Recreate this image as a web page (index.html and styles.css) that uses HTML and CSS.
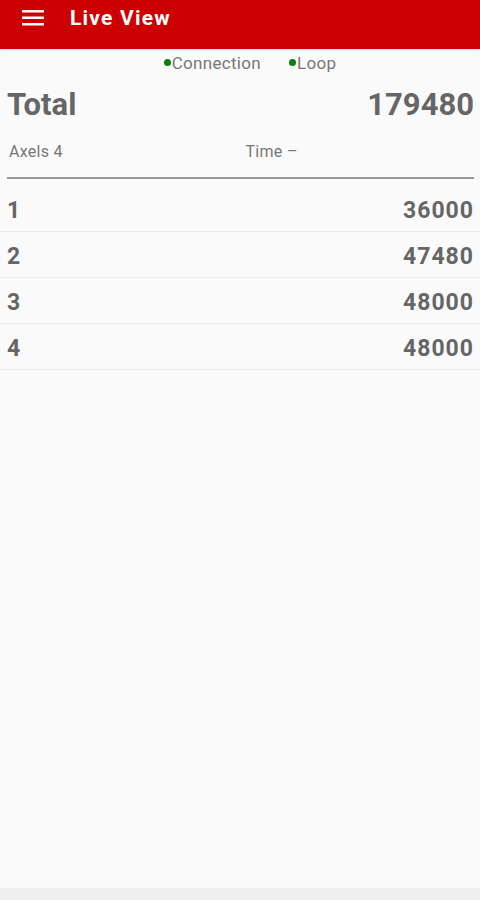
FILE: index.html
```html
<!DOCTYPE html>
<html lang="en">
<head>
    <meta charset="UTF-8">
    <meta name="viewport" content="width=device-width, initial-scale=1.0">
    <title>Live View</title>
    <link rel="stylesheet" href="styles.css">
</head>
<body>

<header class="app-bar">
    <svg class="menu-icon" width="22" height="16" viewBox="0 0 22 16">
        <rect x="0" y="0" width="22" height="2.5" fill="#fff"/>
        <rect x="0" y="6.5" width="22" height="2.5" fill="#fff"/>
        <rect x="0" y="13" width="22" height="2.5" fill="#fff"/>
    </svg>
    <h1 class="app-title">Live View</h1>
</header>

<main class="content">
    <div class="status">
        <span class="status-item"><span class="dot"></span>Connection</span>
        <span class="status-item"><span class="dot"></span>Loop</span>
    </div>

    <div class="summary">
        <div class="total">
            <span>Total</span>
            <span>179480</span>
        </div>
        <div class="meta">
            <span>Axels 4</span>
            <span>Time &ndash;</span>
        </div>
        <hr class="divider">
    </div>

    <ul class="axles">
        <li class="axle"><span>1</span><span class="weight">36000</span></li>
        <li class="axle"><span>2</span><span class="weight">47480</span></li>
        <li class="axle"><span>3</span><span class="weight">48000</span></li>
        <li class="axle"><span>4</span><span class="weight">48000</span></li>
    </ul>
</main>

<div class="nav-bar"></div>

</body>
</html>
```

FILE: styles.css
```css
* {
    box-sizing: border-box;
}
body {
    margin: 0;
    height: 900px;
    display: flex;
    flex-direction: column;
    background: #fafafa;
    font-family: Roboto, "Liberation Sans", sans-serif;
    color: #666;
}
.app-bar {
    height: 49px;
    background: #cc0000;
    display: flex;
    align-items: flex-start;
    padding: 10px 0 0 22px;
    box-shadow: 0 1px 2px rgba(0, 0, 0, 0.12);
}
.app-title {
    margin: -4px 0 0 26px;
    color: #fff;
    font-size: 21px;
    font-weight: bold;
    line-height: 25px;
    letter-spacing: 1.2px;
}
.content {
    flex: 1;
}
.status {
    height: 28px;
    display: flex;
    justify-content: center;
    align-items: center;
    gap: 28px;
    font-size: 17px;
    letter-spacing: 0.3px;
    color: #777;
    padding: 0 0 0 20px;
}
.status-item {
    display: flex;
    align-items: center;
}
.dot {
    width: 7px;
    height: 7px;
    border-radius: 50%;
    background: #0a7d0a;
    margin-right: 1px;
    margin-top: -2px;
}
.summary {
    padding: 0 6px 0 7px;
}
.total {
    height: 55px;
    display: flex;
    justify-content: space-between;
    align-items: center;
    font-size: 31px;
    font-weight: bold;
}
.meta {
    height: 38px;
    display: grid;
    grid-template-columns: 1fr 1fr;
    align-items: center;
    font-size: 16px;
    color: #777;
    padding-left: 2px;
    letter-spacing: 0.3px;
}
.meta span:last-child {
    padding-left: 4px;
}
.divider {
    margin: 7px 0 0 0;
    border: none;
    border-top: 2px solid #999;
}
.axles {
    list-style: none;
    margin: 7px 0 0 0;
    padding: 0;
}
.axle {
    height: 46px;
    display: flex;
    justify-content: space-between;
    align-items: center;
    padding: 4px 7px 0 7px;
    border-bottom: 1px solid #ececec;
    font-size: 23px;
    font-weight: bold;
    letter-spacing: 1px;
}
.weight {
    margin-right: -1px;
}
.nav-bar {
    height: 12px;
    background: #eeeeee;
}
```
